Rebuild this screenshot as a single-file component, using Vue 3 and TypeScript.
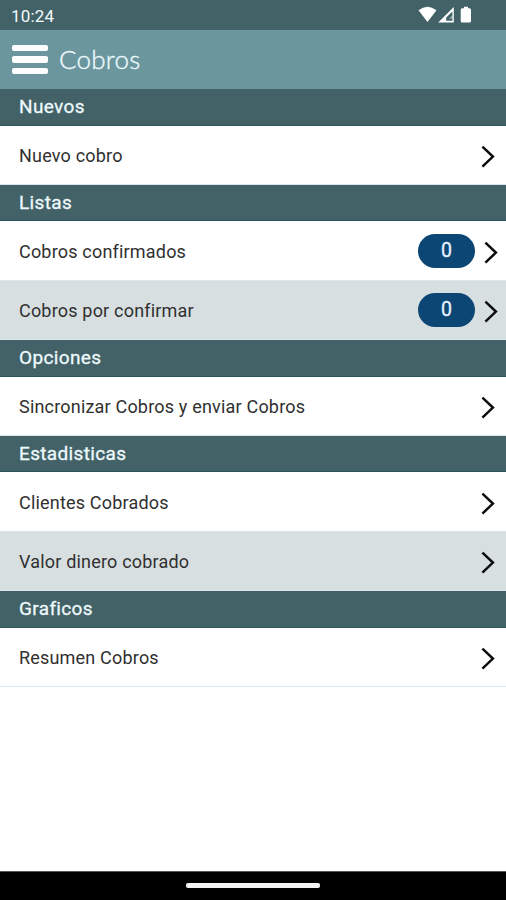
<script setup lang="ts">
interface Item {
  label: string
  count?: number
}
interface Section {
  title: string
  items: Item[]
}

const sections: Section[] = [
  { title: 'Nuevos', items: [{ label: 'Nuevo cobro' }] },
  {
    title: 'Listas',
    items: [
      { label: 'Cobros confirmados', count: 0 },
      { label: 'Cobros por confirmar', count: 0 },
    ],
  },
  { title: 'Opciones', items: [{ label: 'Sincronizar Cobros y enviar Cobros' }] },
  { title: 'Estadisticas', items: [{ label: 'Clientes Cobrados' }, { label: 'Valor dinero cobrado' }] },
  { title: 'Graficos', items: [{ label: 'Resumen Cobros' }] },
]
</script>

<template>
  <div class="screen">
    <div class="status">
      <span class="clock">10:24</span>
      <svg class="indicators" width="56" height="18" viewBox="0 0 56 18" fill="#fff">
        <path d="M0.5 4.3Q9.5-2.7 18.5 4.3L9.5 16Z" />
        <path fill-rule="evenodd" d="M35.8 1V16.6H20.2ZM34.4 5.4L28.2 11.6V14.8H34.4Z" />
        <path d="M34.4 9V12.8H31Z" opacity="0.45" />
        <path d="M46 2.2V.7H50V2.2H51.5Q53 2.2 53 3.7V15Q53 16.5 51.5 16.5H44.2Q42.7 16.5 42.7 15V3.7Q42.7 2.2 44.2 2.2Z" />
      </svg>
    </div>
    <header class="bar">
      <button class="menu" aria-label="Menu"><i></i><i></i><i></i></button>
      <h1>Cobros</h1>
    </header>
    <main>
      <section v-for="section in sections" :key="section.title">
        <h2>{{ section.title }}</h2>
        <ul>
          <li v-for="item in section.items" :key="item.label" :class="{ counted: item.count !== undefined }">
            <span class="label">{{ item.label }}</span>
            <span v-if="item.count !== undefined" class="badge">{{ item.count }}</span>
            <svg class="chevron" width="14" height="23" viewBox="0 0 14 23">
              <path d="M1.4 1.6L11.9 11.6L1.4 21.6" fill="none" stroke="#0c0c0c" stroke-width="2.5" />
            </svg>
          </li>
        </ul>
      </section>
    </main>
    <footer><span class="handle"></span></footer>
  </div>
</template>

<style>
body {
  margin: 0;
}
</style>

<style scoped>
.screen {
  display: flex;
  flex-direction: column;
  height: 900px;
  overflow: hidden;
  background: #fff;
  font-family: Roboto, sans-serif;
}
.status {
  display: flex;
  justify-content: space-between;
  box-sizing: border-box;
  height: 30px;
  padding: 6px 32px 0 11px;
  background: #426268;
  color: #f3fafb;
}
.clock {
  font-size: 17px;
  letter-spacing: 0.15px;
  line-height: 20px;
}
.bar {
  display: flex;
  align-items: center;
  height: 59px;
  padding-left: 12px;
  background: #6b969e;
}
.menu {
  display: flex;
  flex-direction: column;
  gap: 5px;
  width: 36px;
  padding: 0;
  border: 0;
  background: none;
}
.menu i {
  height: 6.4px;
  border-radius: 2px;
  background: #fff;
}
h1 {
  margin: 0 0 2px 11px;
  color: #eaf7fc;
  font: 300 26px/32px Lato, sans-serif;
  letter-spacing: 0.2px;
  -webkit-text-stroke: 0.4px #eaf7fc;
}
main {
  flex: 1;
}
h2 {
  box-sizing: border-box;
  height: 36.6px;
  margin: 0;
  padding-left: 19px;
  border-bottom: 1px solid #2b545b;
  background: #426268;
  color: #eef9fc;
  font-size: 19px;
  font-weight: 400;
  letter-spacing: 0.35px;
  line-height: 35px;
  -webkit-text-stroke: 0.3px #eef9fc;
}
ul {
  margin: 0;
  padding: 0;
  list-style: none;
}
li {
  display: flex;
  align-items: center;
  box-sizing: border-box;
  height: 59.28px;
  padding: 1px 11px 0 19px;
  border-bottom: 1px solid #dce6ef;
  background: #fff;
}
li:nth-child(even) {
  background: #d8dfe1;
}
li.counted {
  padding-right: 8px;
}
.label {
  flex: 1;
  padding-top: 1px;
  color: #303030;
  font-size: 18px;
  letter-spacing: 0.19px;
}
.badge {
  width: 57px;
  height: 34px;
  margin-right: 9px;
  border-radius: 17px;
  background: #0b4675;
  color: #e8f2ff;
  font-size: 19.5px;
  line-height: 34px;
  text-align: center;
  -webkit-text-stroke: 0.3px #e8f2ff;
}
.chevron {
  margin-top: 2px;
}
footer {
  display: flex;
  justify-content: center;
  box-sizing: border-box;
  height: 29px;
  padding-top: 11px;
  border-top: 1px solid #555;
  background: #000;
}
.handle {
  width: 134px;
  height: 5px;
  border-radius: 2px;
  background: #f3f1f1;
}
</style>
